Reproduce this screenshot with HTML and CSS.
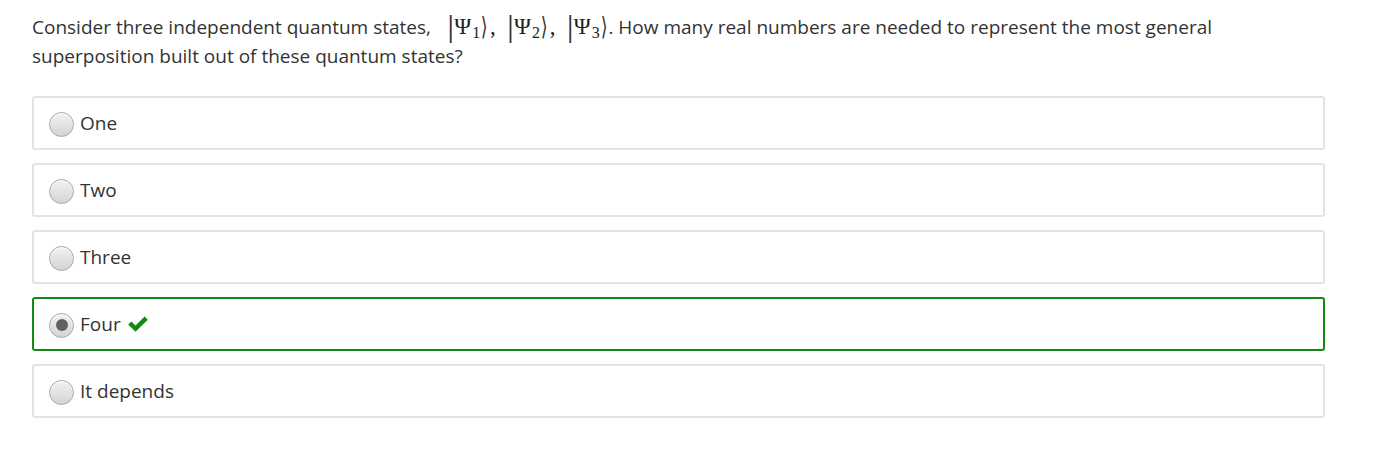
FILE: index.html
```html
<!DOCTYPE html>
<html>
<head>
<meta charset="utf-8">
<link rel="stylesheet" href="styles.css">
</head>
<body>
<div class="quiz">
  <p class="question">Consider three independent quantum states, <span class="math"><span class="ket"><span class="bar">|</span>Ψ<sub>1</sub><span class="ang">⟩</span></span><span class="comma">,</span><span class="ket"><span class="bar">|</span>Ψ<sub>2</sub><span class="ang">⟩</span></span><span class="comma">,</span><span class="ket"><span class="bar">|</span>Ψ<sub>3</sub><span class="ang">⟩</span></span></span>. How many real numbers are needed to represent the most general superposition built out of these quantum states?</p>
  <div class="options">
    <label class="option"><span class="radio"></span><span class="label">One</span></label>
    <label class="option"><span class="radio"></span><span class="label">Two</span></label>
    <label class="option"><span class="radio"></span><span class="label">Three</span></label>
    <label class="option correct"><span class="radio checked"></span><span class="label">Four</span>
      <svg class="check" width="22" height="16" viewBox="0 0 22 16"><path d="M1.2 8.6 L4.4 5.4 L8.5 9.5 L17.6 0.6 L20.8 3.8 L8.5 15.8 Z" fill="#138a13"/></svg>
    </label>
    <label class="option"><span class="radio"></span><span class="label">It depends</span></label>
  </div>
</div>
</body>
</html>
```
FILE: styles.css
```css
html, body {
  margin: 0;
  padding: 0;
  background: #fff;
}
body {
  font-family: "Open Sans", "Liberation Sans", sans-serif;
  color: #333;
  font-size: 19px;
}
.quiz {
  padding: 13px 68px 0 32px;
}
.question {
  margin: 0;
  line-height: 29px;
}
.math {
  font-family: "Liberation Serif", "DejaVu Serif", serif;
  font-size: 23px;
  line-height: 0;
  color: #222;
  margin-left: 11px;
}
.ket {
  white-space: nowrap;
}
.bar {
  font-family: "DejaVu Serif", serif;
  font-size: 22px;
  display: inline-block;
  transform: scaleY(1.25);
  margin-right: 0;
  color: #333;
}
.ang {
  font-family: "DejaVu Serif", serif;
  font-size: 22px;
  display: inline-block;
  transform: scale(0.8, 1.15);
  margin-left: 0;
  color: #333;
}
.math sub {
  font-size: 16px;
  vertical-align: -4px;
  line-height: 0;
  margin-left: 1px;
}
.comma {
  margin-left: 1px;
  margin-right: 11px;
}
.options {
  display: flex;
  flex-direction: column;
  gap: 13px;
  margin-top: 25px;
}
.option {
  display: flex;
  align-items: center;
  height: 50px;
  border: 2px solid #e3e3e3;
  border-radius: 3px;
  padding-left: 15px;
  box-sizing: content-box;
}
.option.correct {
  border-color: #128a12;
}
.radio {
  width: 23px;
  height: 23px;
  border-radius: 50%;
  border: 1px solid #a8a8a8;
  background: linear-gradient(#f2f2f2, #d4d4d4);
  box-shadow: inset 0 1px 1px #fff;
  position: relative;
  flex: none;
  margin-top: 2px;
}
.radio.checked::after {
  content: "";
  position: absolute;
  left: 5.5px;
  top: 5.5px;
  width: 12px;
  height: 12px;
  border-radius: 50%;
  background: #606060;
}
.label {
  margin-left: 6px;
}
.check {
  margin-left: 6px;
}
```
